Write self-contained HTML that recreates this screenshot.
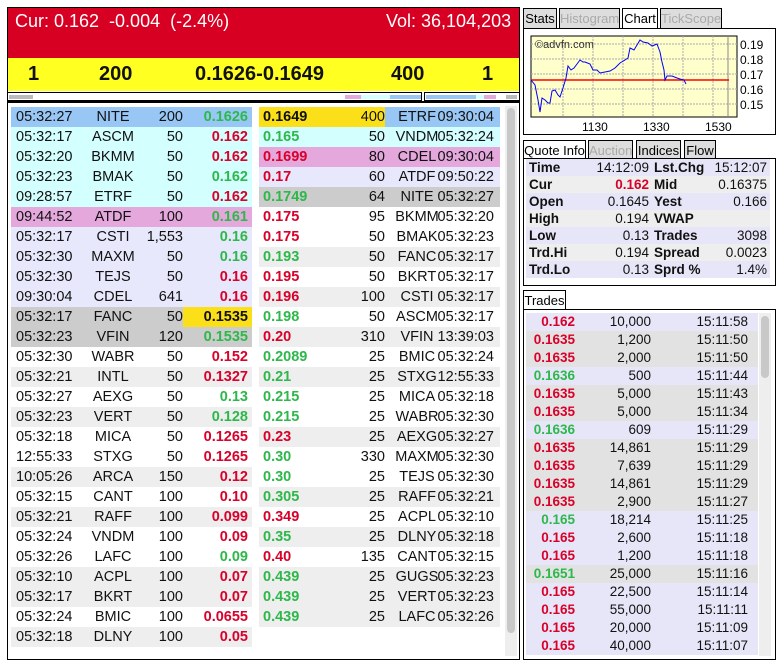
<!DOCTYPE html>
<html><head><meta charset="utf-8"><style>
*{margin:0;padding:0;box-sizing:border-box}
body{width:784px;height:664px;background:#fff;font-family:"Liberation Sans",Arial,sans-serif;position:relative;overflow:hidden;color:#111}
.abs{position:absolute}
.red{color:#d9002a;font-weight:bold}
.grn{color:#2db84a;font-weight:bold}
.row{position:absolute;height:20px;line-height:20px;width:241px;font-size:14.5px;overflow:hidden}
.row span{position:absolute;white-space:nowrap}
.tab{position:absolute;top:8px;height:20px;border:1px solid #000;border-bottom:none;background:#ddd;color:#aaa;font-size:13px;line-height:19px;text-align:center;white-space:nowrap;overflow:hidden}
.qi{position:absolute;left:526px;width:244px;height:17px;line-height:17px;font-size:13.5px}
.qi span{position:absolute;white-space:nowrap}
.tr{position:absolute;left:526px;width:232px;height:18px;line-height:18px;font-size:13.5px}
.tr span{position:absolute;white-space:nowrap}
</style></head><body>

<div class="abs" style="left:7px;top:7px;width:513px;height:653px;border:1px solid #000"></div>
<div class="abs" style="left:8px;top:8px;width:511px;height:50px;background:#d70022"></div>
<div class="abs" style="left:15px;top:11px;color:#fff;font-size:18px">Cur: 0.162&nbsp; -0.004&nbsp; (-2.4%)</div>
<div class="abs" style="left:386px;top:11px;color:#fff;font-size:18px">Vol: 36,104,203</div>
<div class="abs" style="left:8px;top:58px;width:511px;height:33px;background:#ffff22;font-weight:bold;font-size:20px;line-height:33px">
<span class="abs" style="left:20px">1</span><span class="abs" style="left:91px">200</span><span class="abs" style="left:187px">0.1626-0.1649</span><span class="abs" style="left:383px">400</span><span class="abs" style="left:474px">1</span></div>
<div class="abs" style="left:7px;top:92px;width:415px;height:9px;border:1px solid #000"></div>
<div class="abs" style="left:424px;top:92px;width:96px;height:9px;border:1px solid #000"></div>
<div class="abs" style="left:9px;top:95px;width:24px;height:4px;background:#bbb"></div>
<div class="abs" style="left:345px;top:95px;width:16px;height:4px;background:#e4a8dc"></div>
<div class="abs" style="left:361px;top:95px;width:29px;height:4px;background:#d4ffff"></div>
<div class="abs" style="left:390px;top:95px;width:31px;height:4px;background:#99c7f5"></div>
<div class="abs" style="left:426px;top:95px;width:50px;height:4px;background:#99c7f5"></div>
<div class="abs" style="left:476px;top:95px;width:8px;height:4px;background:#d4ffff"></div>
<div class="abs" style="left:484px;top:95px;width:12px;height:4px;background:#e4a8dc"></div>
<div class="abs" style="left:506px;top:95px;width:11px;height:4px;background:#bbb"></div>
<div class="abs" style="left:7px;top:101px;width:513px;height:2px;background:#000"></div>
<div class="abs" style="left:505px;top:106px;width:12px;height:550px;background:#eee"></div>
<div class="abs" style="left:507px;top:108px;width:8px;height:525px;background:#c8c8c8;border-radius:4px"></div>

<div id="L"></div><div id="R"></div>

<div class="tab" style="left:523px;width:34px;color:#000">Stats</div>
<div class="tab" style="left:559px;width:61px">Histogram</div>
<div class="tab" style="left:622px;width:36px;background:#fff;color:#000;height:21px">Chart</div>
<div class="tab" style="left:660px;width:62px">TickScope</div>
<div class="abs" style="left:523px;top:28px;width:253px;height:107px;border:1px solid #000"></div>
<svg class="abs" style="left:523px;top:28px" width="253" height="107" viewBox="523 28 253 107">
<rect x="531" y="36" width="206" height="81" fill="#ffffcc" stroke="#000" stroke-width="1"/>
<g stroke="#aaa" stroke-dasharray="2,1" stroke-width="1">
<line x1="531" y1="44" x2="737" y2="44"/><line x1="531" y1="59" x2="737" y2="59"/><line x1="531" y1="74" x2="737" y2="74"/><line x1="531" y1="89" x2="737" y2="89"/><line x1="531" y1="104" x2="737" y2="104"/>
<line x1="563" y1="36" x2="563" y2="117"/><line x1="593" y1="36" x2="593" y2="117"/><line x1="623" y1="36" x2="623" y2="117"/><line x1="653" y1="36" x2="653" y2="117"/><line x1="683" y1="36" x2="683" y2="117"/><line x1="713" y1="36" x2="713" y2="117"/>
</g>
<line x1="728" y1="36" x2="728" y2="117" stroke="#888"/>
<line x1="531" y1="80" x2="729" y2="80" stroke="#f00" stroke-width="1.5"/>
<polyline fill="none" stroke="#00f" stroke-width="1" points="531,80 535,85 538,100 540,112 542,98 545,100 548,103 550,103 552,91 555,90 558,95 560,97 563,88 566,78 568,66 571,70 574,68 577,64 580,60 583,62 585,62 590,64 593,70 597,70 600,73 605,72 610,71 615,68 620,63 625,60 628,58 630,48 634,50 637,45 640,40 643,42 648,43 652,46 657,44 660,52 662,62 664,70 665,80 667,76 672,76 677,78 680,79 684,80 686,84"/>
<text x="535" y="48" font-size="11" fill="#333" font-family="Liberation Sans">©advfn.com</text>
<g font-size="12" fill="#000" font-family="Liberation Sans"><text x="740" y="49">0.19</text><text x="740" y="64">0.18</text><text x="740" y="79">0.17</text><text x="740" y="94">0.16</text><text x="740" y="109">0.15</text>
<text x="582" y="131">1130</text><text x="643" y="131">1330</text><text x="705" y="131">1530</text></g>
</svg>

<div class="tab" style="left:523px;top:140px;width:63px;background:#fff;color:#000;height:18px">Quote Info</div>
<div class="tab" style="left:588px;top:140px;width:45px">Auction</div>
<div class="tab" style="left:636px;top:140px;width:45px;color:#000">Indices</div>
<div class="tab" style="left:684px;top:140px;width:32px;color:#000">Flow</div>
<div class="abs" style="left:523px;top:158px;width:253px;height:128px;border:1px solid #000"></div>
<div id="Q"></div>

<div class="tab" style="left:523px;top:290px;width:43px;background:#fff;color:#000;height:20px">Trades</div>
<div class="abs" style="left:523px;top:309px;width:253px;height:351px;border:1px solid #000"></div>
<div class="abs" style="left:759px;top:313px;width:12px;height:343px;background:#eee"></div>
<div class="abs" style="left:761px;top:316px;width:8px;height:62px;background:#c8c8c8;border-radius:4px"></div>
<div id="T"></div>

<script>
var W='#fff',G='#eee',C='#d4ffff',B='#99c7f5',P='#e4a8dc',V='#e8e8fc',D='#cccccc';
var L=[["05:32:27","NITE","200","0.1626","g",B],["05:32:17","ASCM","50","0.162","r",C],["05:32:20","BKMM","50","0.162","r",C],["05:32:23","BMAK","50","0.162","g",C],["09:28:57","ETRF","50","0.162","r",C],["09:44:52","ATDF","100","0.161","g",P],["05:32:17","CSTI","1,553","0.16","g",V],["05:32:30","MAXM","50","0.16","g",V],["05:32:30","TEJS","50","0.16","r",V],["09:30:04","CDEL","641","0.16","r",V],["05:32:17","FANC","50","0.1535","y",D],["05:32:23","VFIN","120","0.1535","g",D],["05:32:30","WABR","50","0.152","r",W],["05:32:21","INTL","50","0.1327","r",G],["05:32:27","AEXG","50","0.13","g",W],["05:32:23","VERT","50","0.128","g",G],["05:32:18","MICA","50","0.1265","r",W],["12:55:33","STXG","50","0.1265","r",W],["10:05:26","ARCA","150","0.12","r",G],["05:32:15","CANT","100","0.10","r",W],["05:32:21","RAFF","100","0.099","r",G],["05:32:24","VNDM","100","0.09","r",W],["05:32:26","LAFC","100","0.09","g",W],["05:32:10","ACPL","100","0.07","r",G],["05:32:17","BKRT","100","0.07","r",G],["05:32:24","BMIC","100","0.0655","r",W],["05:32:18","DLNY","100","0.05","r",G],["05:32:30","GUGS","100","0.0301","r",W]];
var R=[["0.1649","400","ETRF","09:30:04","y",B],["0.165","50","VNDM","05:32:24","g",C],["0.1699","80","CDEL","09:30:04","r",P],["0.17","60","ATDF","09:50:22","r",V],["0.1749","64","NITE","05:32:27","g",D],["0.175","95","BKMM","05:32:20","r",W],["0.175","50","BMAK","05:32:23","r",W],["0.193","50","FANC","05:32:17","g",G],["0.195","50","BKRT","05:32:17","r",W],["0.196","100","CSTI","05:32:17","r",G],["0.198","50","ASCM","05:32:17","g",W],["0.20","310","VFIN","13:39:03","r",G],["0.2089","25","BMIC","05:32:24","g",W],["0.21","25","STXG","12:55:33","g",G],["0.215","25","MICA","05:32:18","g",W],["0.215","25","WABR","05:32:30","g",W],["0.23","25","AEXG","05:32:27","r",G],["0.30","330","MAXM","05:32:30","g",W],["0.30","25","TEJS","05:32:30","g",W],["0.305","25","RAFF","05:32:21","g",G],["0.349","25","ACPL","05:32:10","r",W],["0.35","25","DLNY","05:32:18","g",G],["0.40","135","CANT","05:32:15","r",W],["0.439","25","GUGS","05:32:23","g",G],["0.439","25","VERT","05:32:23","g",G],["0.439","25","LAFC","05:32:26","g",G]];
function cl(c){return c=='r'?'red':c=='g'?'grn':''}
var h='';
L.forEach(function(r,i){var y=107+i*20;
h+='<div class="row" style="left:11px;top:'+y+'px;background:'+r[5]+';height:'+Math.min(20,650-y)+'px"><span style="left:5px">'+r[0]+'</span><span style="left:62px;width:80px;text-align:center">'+r[1]+'</span><span style="right:69px">'+r[2]+'</span>'+
(r[4]=='y'?'<span style="left:172px;width:69px;height:20px;background:#fbe019;font-weight:bold;text-align:right;padding-right:4px">'+r[3]+'</span>':'<span class="'+cl(r[4])+'" style="right:4px">'+r[3]+'</span>')+'</div>';});
document.getElementById('L').innerHTML=h;h='';
R.forEach(function(r,i){var y=107+i*20;
h+='<div class="row" style="left:259px;top:'+y+'px;background:'+r[5]+'">'+(r[4]=='y'?'<span style="left:0;width:126px;height:20px;background:#fbe019"></span><span style="left:4px;font-weight:bold">'+r[0]+'</span>':'<span class="'+cl(r[4])+'" style="left:4px">'+r[0]+'</span>')+'<span style="right:115px">'+r[1]+'</span><span style="left:128px;width:60px;text-align:center">'+r[2]+'</span><span style="right:6px">'+r[3]+'</span></div>';});
document.getElementById('R').innerHTML=h;h='';
var Q=[["Time","14:12:09","Lst.Chg","15:12:07"],["Cur","0.162","Mid","0.16375"],["Open","0.1645","Yest","0.166"],["High","0.194","VWAP",""],["Low","0.13","Trades","3098"],["Trd.Hi","0.194","Spread","0.0023"],["Trd.Lo","0.13","Sprd %","1.4%"]];
Q.forEach(function(r,i){var y=159+i*17;
h+='<div class="qi" style="top:'+y+'px;background:'+(i%2?'#eee':'#e6e6f8')+'"><span style="left:3px;font-weight:bold">'+r[0]+'</span><span style="right:121px" class="'+(i==1?'red':'')+'">'+r[1]+'</span><span style="left:128px;font-weight:bold">'+r[2]+'</span><span style="right:3px">'+r[3]+'</span></div>';});
document.getElementById('Q').innerHTML=h;h='';
var T=[["0.162","10,000","15:11:58","r",1],["0.1635","1,200","15:11:50","r",0],["0.1635","2,000","15:11:50","r",0],["0.1636","500","15:11:44","g",1],["0.1635","5,000","15:11:43","r",0],["0.1635","5,000","15:11:34","r",0],["0.1636","609","15:11:29","g",1],["0.1635","14,861","15:11:29","r",0],["0.1635","7,639","15:11:29","r",0],["0.1635","14,861","15:11:29","r",0],["0.1635","2,900","15:11:27","r",0],["0.165","18,214","15:11:25","g",1],["0.165","2,600","15:11:18","r",1],["0.165","1,200","15:11:18","r",1],["0.1651","25,000","15:11:16","g",0],["0.165","22,500","15:11:14","r",1],["0.165","55,000","15:11:11","r",1],["0.165","20,000","15:11:09","r",1],["0.165","40,000","15:11:07","r",1]];
T.forEach(function(r,i){var y=313+i*18;
h+='<div class="tr" style="top:'+y+'px;background:'+(r[4]?'#e6e6f8':'#e2e2e2')+'"><span class="'+cl(r[3])+'" style="right:183px">'+r[0]+'</span><span style="right:107px">'+r[1]+'</span><span style="right:10px">'+r[2]+'</span></div>';});
document.getElementById('T').innerHTML=h;
</script>
</body></html>
